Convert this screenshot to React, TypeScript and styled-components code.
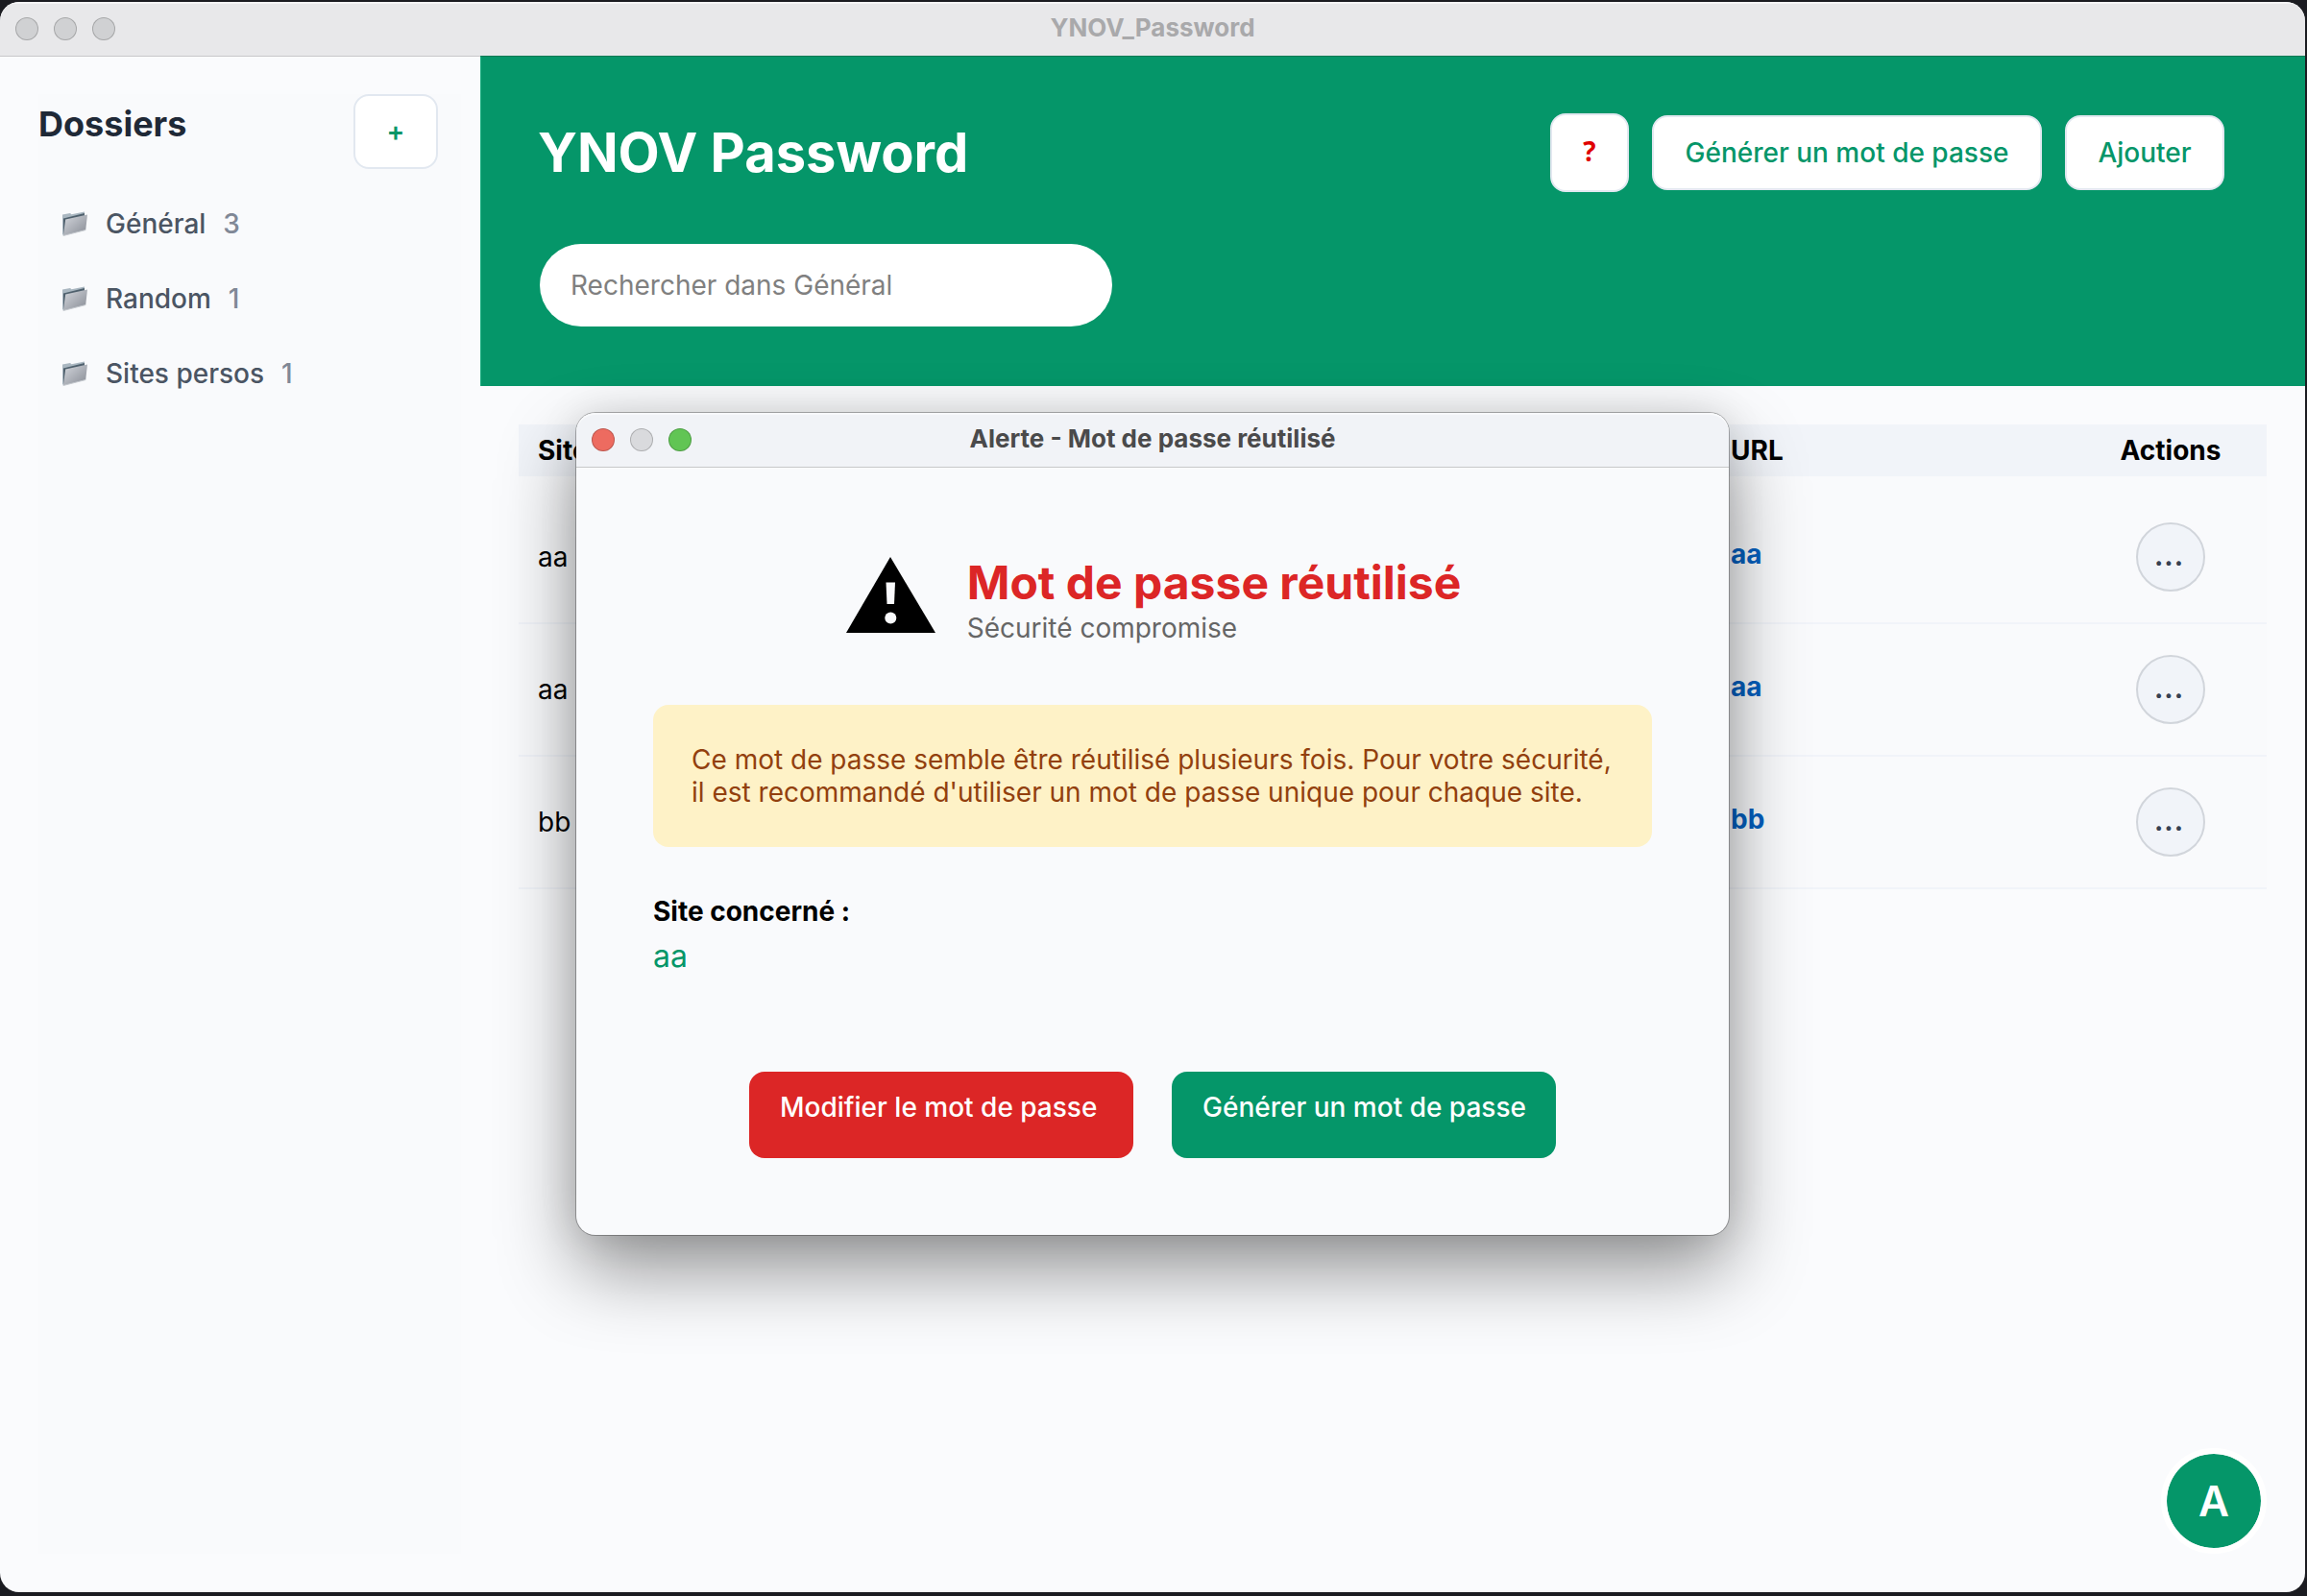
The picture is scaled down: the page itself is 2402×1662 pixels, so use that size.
import React from "react";
import styled, { createGlobalStyle } from "styled-components";

const GlobalStyle = createGlobalStyle`
  *, *::before, *::after { box-sizing: border-box; }
  body {
    margin: 0;
    background: #1b1c21;
    font-family: Inter, "Liberation Sans", sans-serif;
    font-size: 28px;
    line-height: 34px;
    color: #000;
  }
  button, input { font: inherit; }
  h1, h2, p, ul { margin: 0; padding: 0; }
`;

const green = "#059669";
const panel = "#f9fafc";

const Desktop = styled.div`
  min-height: 100vh;
  display: flex;
  padding: 2px 2px 4px 0;
`;

const AppWindow = styled.div`
  position: relative;
  flex: 1;
  display: flex;
  flex-direction: column;
  border-radius: 20px;
  overflow: hidden;
  background: #fafbfd;
`;

const TitleBar = styled.header<{ $active?: boolean }>`
  position: relative;
  z-index: 1;
  display: grid;
  grid-template-columns: 1fr auto 1fr;
  align-items: center;
  height: 56px;
  padding: 0 16px;
  background: ${(p) => (p.$active ? "#f1f3f7" : "#e8e8ea")};
  color: ${(p) => (p.$active ? "#4a4a4b" : "#a9a9ab")};
  box-shadow: inset 0 2px 0 rgba(255, 255, 255, 0.5), 0 1px 0 rgba(0, 0, 0, 0.2);
  font-size: 26px;
  font-weight: 700;
`;

const Lights = styled.div`
  display: flex;
  gap: 16px;
`;

const Light = styled.button<{ $color: string }>`
  width: 24px;
  height: 24px;
  padding: 0;
  border: 1px solid rgba(0, 0, 0, 0.2);
  border-radius: 50%;
  background: ${(p) => p.$color};
`;

const TitleText = styled.span`
  padding-bottom: 2px;
`;

const Columns = styled.div`
  flex: 1;
  display: grid;
  grid-template-columns: 500px minmax(0, 1fr);
`;

const Sidebar = styled.aside`
  display: flex;
  padding: 40px 20px 40px 40px;
`;

const SidebarPanel = styled.div`
  flex: 1;
  padding-right: 24px;
  background: ${panel};
`;

const SidebarHead = styled.div`
  display: flex;
  justify-content: space-between;
  margin-bottom: 18px;
`;

const SidebarTitle = styled.h2`
  padding-top: 9px;
  font-size: 36px;
  line-height: 44px;
  color: #1f2937;
`;

const PlainButton = styled.button<{ $width?: number; $height?: number }>`
  width: ${(p) => (p.$width ? `${p.$width}px` : "auto")};
  height: ${(p) => p.$height ?? 78}px;
  padding: 0 32px;
  border: 2px solid #e2e8f0;
  border-radius: 16px;
  background: #fff;
  color: ${green};
  font-weight: 500;
  white-space: nowrap;
`;

const AddFolder = styled(PlainButton)`
  font-weight: 600;
`;

const HelpButton = styled(PlainButton)`
  padding: 0 0 4px;
  color: #e00000;
  font-family: "Open Sans", "Noto Sans", sans-serif;
  font-weight: 700;
`;

const FolderList = styled.ul`
  list-style: none;
  padding-left: 24px;
`;

const FolderItem = styled.li`
  display: flex;
  align-items: center;
  gap: 18px;
  height: 78px;
  color: #4b5563;
  font-weight: 500;
`;

const Count = styled.span`
  color: #808896;
`;

const Hero = styled.section`
  padding: 60px 84px 62px 60px;
  background: ${green};
  box-shadow: inset 1px 0 0 #1fb183;
`;

const HeroRow = styled.div`
  display: flex;
  align-items: center;
  gap: 24px;
  margin-bottom: 54px;
`;

const HeroTitle = styled.h1`
  flex: 1;
  font-size: 56px;
  line-height: 68px;
  color: #fff;
`;

const SearchForm = styled.form`
  padding: 0 2px;
`;

const Search = styled.input`
  display: block;
  width: 596px;
  height: 86px;
  padding: 0 32px;
  border: 0;
  border-radius: 43px;
  background: #fff;
  &::placeholder { color: #808080; opacity: 1; }
`;

const TableArea = styled.section`
  padding: 40px;
`;

const Table = styled.table`
  width: 100%;
  table-layout: fixed;
  border-collapse: separate;
  border-spacing: 0;
  background: ${panel};
`;

const Th = styled.th<{ $width?: string; $center?: boolean }>`
  width: ${(p) => p.$width ?? "auto"};
  padding: 10px 20px;
  background: #f1f4f9;
  font-weight: 700;
  text-align: ${(p) => (p.$center ? "center" : "left")};
`;

const SpacerBody = styled.tbody`
  &::before {
    content: "";
    display: table-row;
    height: 16px;
  }
`;

const Td = styled.td<{ $center?: boolean }>`
  height: 138px;
  padding: 0 20px;
  border-bottom: 2px solid #f1f4f9;
  text-align: ${(p) => (p.$center ? "center" : "left")};
`;

const SiteLink = styled.a`
  display: block;
  padding-bottom: 6px;
  color: #0460bf;
  font-weight: 700;
  text-decoration: none;
`;

const MoreButton = styled.button`
  display: block;
  width: 72px;
  height: 72px;
  margin: 0 auto;
  padding: 0 4px 8px 0;
  border: 2px solid #d1d5db;
  border-radius: 50%;
  background: #f1f4f9;
  color: #374151;
  font-size: 36px;
`;

const Avatar = styled.button`
  position: absolute;
  right: 40px;
  bottom: 40px;
  width: 110px;
  height: 110px;
  padding: 0;
  border: 6px solid #fff;
  border-radius: 50%;
  background: ${green};
  background-clip: padding-box;
  color: #fff;
  font-size: 44px;
  font-weight: 600;
`;

const Dialog = styled.div`
  position: absolute;
  z-index: 2;
  top: 428px;
  left: 50%;
  width: 1200px;
  margin-left: -600px;
  border-radius: 20px;
  background: ${panel};
  box-shadow: 0 0 0 1px rgba(0, 0, 0, 0.28), 0 36px 80px rgba(0, 0, 0, 0.42), 0 0 40px rgba(0, 0, 0, 0.1);
`;

const DialogBar = styled(TitleBar)`
  border-radius: 20px 20px 0 0;
`;

const DialogBody = styled.div`
  padding: 92px 80px 80px;
`;

const AlertHead = styled.div`
  display: flex;
  justify-content: center;
  gap: 32px;
  margin-bottom: 62px;
`;

const AlertTitle = styled.h2`
  font-size: 48px;
  line-height: 58px;
  color: #dc2626;
`;

const AlertSub = styled.p`
  line-height: 36px;
  color: #666;
`;

const Notice = styled.p`
  margin-bottom: 50px;
  padding: 40px;
  border-radius: 16px;
  background: #fef2c7;
  color: #92400e;
`;

const FieldLabel = styled.p`
  margin-bottom: 10px;
  font-weight: 700;
`;

const FieldValue = styled.p`
  margin-bottom: 100px;
  font-size: 32px;
  line-height: 40px;
  color: ${green};
`;

const Actions = styled.div`
  display: flex;
  justify-content: center;
  gap: 40px;
`;

const ActionButton = styled.button<{ $color: string }>`
  width: 400px;
  padding: 20px 32px 36px;
  border: 0;
  border-radius: 16px;
  background: ${(p) => p.$color};
  color: #fff;
  font-weight: 500;
  text-align: left;
  white-space: nowrap;
`;

function FolderIcon() {
  return (
    <svg width="28" height="28" viewBox="0 0 28 28" aria-hidden="true">
      <defs>
        <linearGradient id="folderFront" x1="0" y1="0" x2="1" y2="1">
          <stop offset="0" stopColor="#d5d8de" />
          <stop offset="1" stopColor="#868a93" />
        </linearGradient>
      </defs>
      <path d="M1 4.500 9 3l1.500 1.200L24 1.500v4L4 25.500H1z" fill="#aab7c1" />
      <path d="M2 8.500 24 3v3L4 25l-2-.5z" fill="#4f606d" />
      <path d="M4.200 9.500 27 4.500 25.200 20.500 1.800 26.500z" fill="url(#folderFront)" />
      <path d="M1.800 26.500 25.200 20.500" stroke="#c4c8ce" strokeWidth="1" />
    </svg>
  );
}

function WarningIcon() {
  return (
    <svg width="96" height="82" viewBox="0 0 96 82" aria-hidden="true">
      <path d="M48 2 95 81H2z" fill="#000" />
      <path d="M43.500 28.500h9.500l-1 22.500h-7.500z" fill={panel} />
      <circle cx="48.300" cy="65.500" r="6" fill={panel} />
    </svg>
  );
}

const folders = [
  { name: "Général", count: 3 },
  { name: "Random", count: 1 },
  { name: "Sites persos", count: 1 },
];

const entries = [
  { id: 1, site: "aa", url: "aa" },
  { id: 2, site: "aa", url: "aa" },
  { id: 3, site: "bb", url: "bb" },
];

function WindowLights({ colors }: { colors: string[] }) {
  const labels = ["Fermer", "Réduire", "Agrandir"];
  return (
    <Lights>
      {colors.map((color, i) => (
        <Light key={labels[i]} type="button" aria-label={labels[i]} $color={color} />
      ))}
    </Lights>
  );
}

export default function App() {
  return (
    <>
      <GlobalStyle />
      <Desktop>
        <AppWindow>
          <TitleBar>
            <WindowLights colors={["#d0d1d3", "#d0d1d3", "#d0d1d3"]} />
            <TitleText>YNOV_Password</TitleText>
          </TitleBar>
          <Columns>
            <Sidebar>
              <SidebarPanel>
                <SidebarHead>
                  <SidebarTitle>Dossiers</SidebarTitle>
                  <AddFolder type="button" $width={88}>+</AddFolder>
                </SidebarHead>
                <FolderList>
                  {folders.map((f) => (
                    <FolderItem key={f.name}>
                      <FolderIcon />
                      <span>{f.name}</span>
                      <Count>{f.count}</Count>
                    </FolderItem>
                  ))}
                </FolderList>
              </SidebarPanel>
            </Sidebar>
            <main>
              <Hero>
                <HeroRow>
                  <HeroTitle>YNOV Password</HeroTitle>
                  <HelpButton type="button" $width={82} $height={82}>?</HelpButton>
                  <PlainButton type="button" $width={406}>Générer un mot de passe</PlainButton>
                  <PlainButton type="button" $width={166}>Ajouter</PlainButton>
                </HeroRow>
                <SearchForm>
                  <Search type="search" aria-label="Rechercher dans Général" placeholder="Rechercher dans Général" />
                </SearchForm>
              </Hero>
              <TableArea>
                <Table>
                  <thead>
                    <tr>
                      <Th>Site</Th>
                      <Th $width="378px">URL</Th>
                      <Th $width="200px" $center>Actions</Th>
                    </tr>
                  </thead>
                  <SpacerBody>
                    {entries.map((e) => (
                      <tr key={e.id}>
                        <Td>{e.site}</Td>
                        <Td><SiteLink href="#">{e.url}</SiteLink></Td>
                        <Td $center><MoreButton type="button">...</MoreButton></Td>
                      </tr>
                    ))}
                  </SpacerBody>
                </Table>
              </TableArea>
            </main>
          </Columns>
          <Avatar type="button">A</Avatar>
          <Dialog role="alertdialog" aria-labelledby="alert-title">
            <DialogBar $active>
              <WindowLights colors={["#ed6b60", "#d9dadd", "#61c554"]} />
              <TitleText>Alerte - Mot de passe réutilisé</TitleText>
            </DialogBar>
            <DialogBody>
              <AlertHead>
                <WarningIcon />
                <div>
                  <AlertTitle id="alert-title">Mot de passe réutilisé</AlertTitle>
                  <AlertSub>Sécurité compromise</AlertSub>
                </div>
              </AlertHead>
              <Notice>
                Ce mot de passe semble être réutilisé plusieurs fois. Pour votre sécurité, il est recommandé d'utiliser un mot de passe unique pour chaque site.
              </Notice>
              <FieldLabel>Site concerné :</FieldLabel>
              <FieldValue>aa</FieldValue>
              <Actions>
                <ActionButton type="button" $color="#dc2626">Modifier le mot de passe</ActionButton>
                <ActionButton type="button" $color={green}>Générer un mot de passe</ActionButton>
              </Actions>
            </DialogBody>
          </Dialog>
        </AppWindow>
      </Desktop>
    </>
  );
}
